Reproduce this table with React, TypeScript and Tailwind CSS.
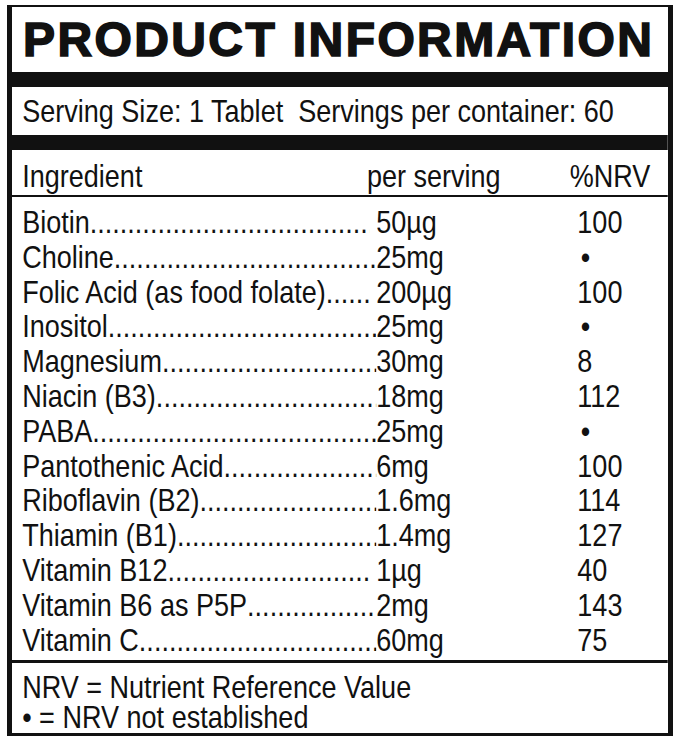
const rows: { name: string; amount: string; nrv: string; gap?: boolean }[] = [
  { name: "Biotin", amount: "50µg", nrv: "100", gap: true },
  { name: "Choline", amount: "25mg", nrv: "•" },
  { name: "Folic Acid (as food folate)", amount: "200µg", nrv: "100", gap: true },
  { name: "Inositol", amount: "25mg", nrv: "•" },
  { name: "Magnesium", amount: "30mg", nrv: "8" },
  { name: "Niacin (B3)", amount: "18mg", nrv: "112" },
  { name: "PABA", amount: "25mg", nrv: "•" },
  { name: "Pantothenic Acid", amount: "6mg", nrv: "100" },
  { name: "Riboflavin (B2)", amount: "1.6mg", nrv: "114" },
  { name: "Thiamin (B1)", amount: "1.4mg", nrv: "127" },
  { name: "Vitamin B12", amount: "1µg", nrv: "40", gap: true },
  { name: "Vitamin B6 as P5P", amount: "2mg", nrv: "143" },
  { name: "Vitamin C", amount: "60mg", nrv: "75" },
];

const dots = ".".repeat(80);

export default function App() {
  return (
    <div className="min-h-screen bg-white pl-[7px] pt-[5px] text-[#111]">
      <div className="w-[666px] border-l-[5px] border-r-[5px] border-t-2 border-b-[3px] border-[#111] overflow-hidden">
        {/* title */}
        <div className="h-[65px] flex items-center pl-[11px]">
          <h1 className="font-['Liberation_Sans',Arial,sans-serif] font-bold text-[48px] leading-none tracking-[2.4px] [-webkit-text-stroke:1.6px_#111]">
            PRODUCT INFORMATION
          </h1>
        </div>
        <div className="h-[15px] bg-[#111]" />

        {/* body text is condensed (no narrow face installed), so the block is laid out wider and squeezed */}
        <div className="w-[776px] origin-left scale-x-[0.845] font-['Liberation_Sans',Arial,sans-serif] text-[32px]">
          <div className="h-[48px] flex items-center pl-[12px] whitespace-nowrap">
            Serving Size: 1 Tablet&nbsp; Servings per container: 60
          </div>
          <div className="h-[15px] bg-[#111]" />

          {/* header */}
          <div className="h-[47px] grid grid-cols-[408px_240px_1fr] items-center pt-[2px] pl-[12px] border-b-2 border-[#111]">
            <span>Ingredient</span>
            <span>per serving</span>
            <span>%NRV</span>
          </div>

          {/* ingredient rows */}
          <div className="pt-[8px] pb-[3px] border-b-[3px] border-[#111]">
            {rows.map((r) => (
              <div key={r.name} className="grid grid-cols-[419px_238px_1fr] pl-[12px] leading-[34.8px]">
                <div className="flex min-w-0">
                  <span className="whitespace-nowrap">{r.name}</span>
                  <span className={`flex-1 overflow-hidden whitespace-nowrap ${r.gap ? "mr-[8px]" : ""}`}>{dots}</span>
                </div>
                <span className="whitespace-nowrap">{r.amount}</span>
                <span className={r.nrv === "•" ? "pl-[4px]" : ""}>{r.nrv}</span>
              </div>
            ))}
          </div>

          {/* footer */}
          <div className="pt-[9px] pb-[1px] pl-[12px] leading-[30px]">
            <p>NRV = Nutrient Reference Value</p>
            <p>• = NRV not established</p>
          </div>
        </div>
      </div>
    </div>
  );
}
